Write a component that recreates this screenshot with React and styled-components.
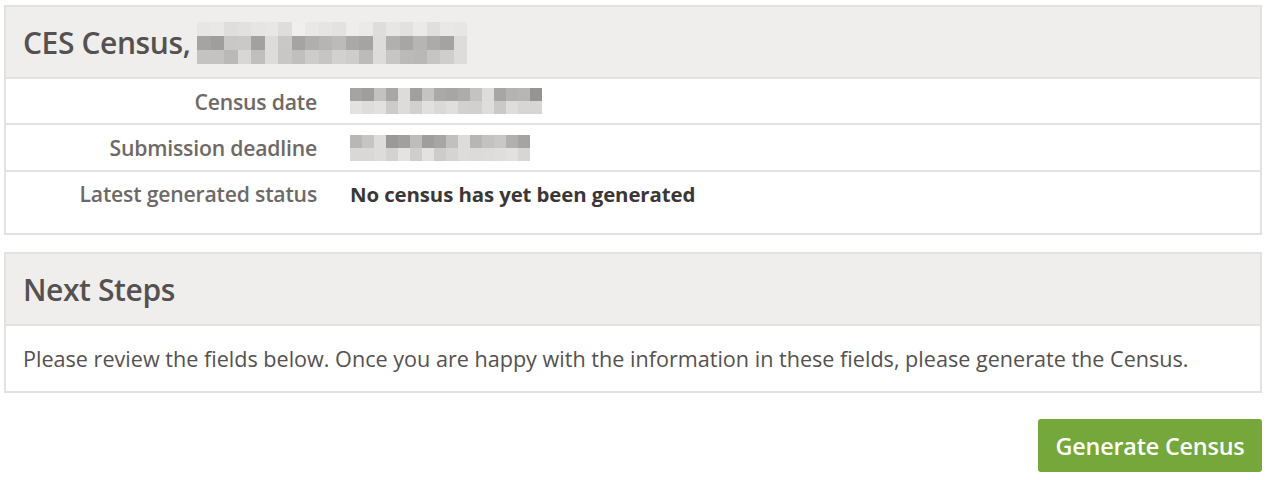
import React from "react";
import styled, { createGlobalStyle } from "styled-components";

const GlobalStyle = createGlobalStyle`
  body {
    margin: 0;
    background: #ffffff;
    font-family: "Open Sans", "Liberation Sans", sans-serif;
    color: #555150;
  }
`;

const Page = styled.div`
  display: flex;
  flex-direction: column;
  padding: 5px 12px 0 4px;
  gap: 17px;
`;

const Panel = styled.section`
  border: 2px solid #e4e2e1;
  background: #fff;
`;

const PanelHeader = styled.header`
  display: flex;
  align-items: center;
  gap: 7px;
  height: 70px;
  padding: 0 17px;
  background: #efeeed;
  border-bottom: 2px solid #e4e2e1;
`;

const Title = styled.h1`
  margin: 0;
  font-size: 30px;
  font-weight: 600;
  color: #555150;
  letter-spacing: -0.4px;
`;

const Mosaic = styled.span`
  display: inline-grid;
  grid-template-columns: repeat(${(p) => p.$cols}, ${(p) => p.$cell}px);
  grid-auto-rows: ${(p) => p.$rowH}px;
  margin-top: ${(p) => p.$shift || 0}px;
`;

const Cell = styled.span`
  background: ${(p) => p.$shade};
`;

const Rows = styled.div`
  display: flex;
  flex-direction: column;
`;

const Row = styled.div`
  display: grid;
  grid-template-columns: 311px 1fr;
  column-gap: 33px;
  align-items: center;
  height: ${(p) => p.$h}px;
  padding-bottom: ${(p) => (p.$tall ? "18px" : "0")};
  box-sizing: border-box;
  border-top: ${(p) => (p.$first ? "none" : "2px solid #e4e2e1")};
`;

const Label = styled.div`
  text-align: right;
  font-size: 21.2px;
  font-weight: 600;
  color: #6e6967;
  letter-spacing: -0.2px;
`;

const Value = styled.div`
  font-size: 20.4px;
  font-weight: 700;
  color: #3a3736;
  letter-spacing: -0.1px;
`;

const Body = styled.p`
  margin: 0;
  height: 65px;
  display: flex;
  align-items: center;
  padding: 0 17px;
  font-size: 21.6px;
  color: #555150;
  white-space: nowrap;
`;

const Actions = styled.div`
  display: flex;
  justify-content: flex-end;
  padding-top: 9px;
`;

const Button = styled.button`
  height: 53px;
  width: 224px;
  padding: 0;
  border: none;
  border-radius: 3px;
  background: #75a73b;
  color: #fff;
  font-family: inherit;
  font-size: 23.4px;
  font-weight: 600;
  letter-spacing: -0.2px;
  cursor: pointer;
`;

function makeCells(seed, cols, levels, gaps) {
  const out = [];
  let s = seed;
  levels.forEach(([lo, hi]) => {
    for (let c = 0; c < cols; c++) {
      s = (s * 9301 + 49297) % 233280;
      let v = lo + Math.floor((s / 233280) * (hi - lo));
      if (gaps.includes(c)) v = Math.max(v, 222);
      out.push(`rgb(${v},${v - 2},${v - 3})`);
    }
  });
  return out;
}

function Blur({ seed, cols, cell, rowH, levels, gaps = [], shift }) {
  const list = makeCells(seed, cols, levels, gaps);
  return (
    <Mosaic $cols={cols} $cell={cell} $rowH={rowH} $shift={shift}>
      {list.map((c, i) => (
        <Cell key={i} $shade={c} />
      ))}
    </Mosaic>
  );
}

export default function App() {
  return (
    <>
      <GlobalStyle />
      <Page>
        <Panel>
          <PanelHeader>
            <Title>CES Census,</Title>
            <Blur
              seed={7}
              cols={20}
              cell={13.5}
              rowH={14}
              levels={[[222, 244], [158, 205], [185, 220]]}
              gaps={[5, 13, 19]}
              shift={2}
            />
          </PanelHeader>
          <Rows>
            <Row $first $h={44}>
              <Label>Census date</Label>
              <Blur
                seed={3}
                cols={16}
                cell={12}
                rowH={13}
                levels={[[150, 200], [200, 232]]}
                gaps={[4, 11]}
              />
            </Row>
            <Row $h={47}>
              <Label>Submission deadline</Label>
              <Blur
                seed={11}
                cols={15}
                cell={12}
                rowH={13}
                levels={[[150, 205], [205, 235]]}
                gaps={[2, 9]}
              />
            </Row>
            <Row $tall $h={63}>
              <Label>Latest generated status</Label>
              <Value>No census has yet been generated</Value>
            </Row>
          </Rows>
        </Panel>
        <Panel>
          <PanelHeader>
            <Title>Next Steps</Title>
          </PanelHeader>
          <Body>
            Please review the fields below. Once you are happy with the information in these fields, please generate the Census.
          </Body>
        </Panel>
        <Actions>
          <Button>Generate Census</Button>
        </Actions>
      </Page>
    </>
  );
}
